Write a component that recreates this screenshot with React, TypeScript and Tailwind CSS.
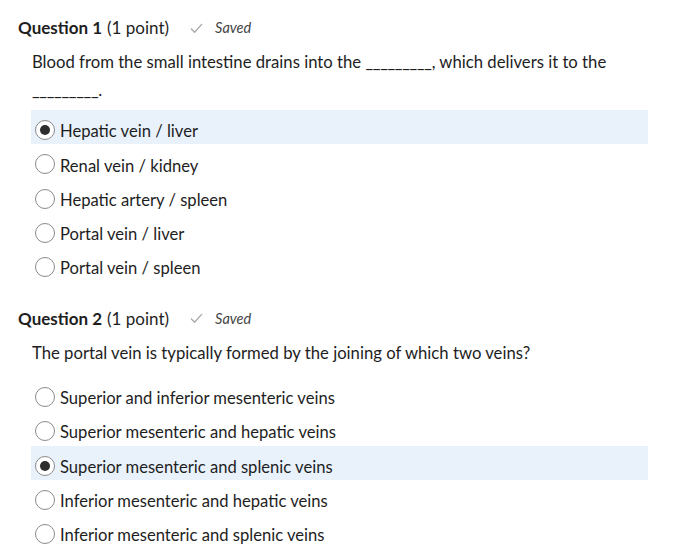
const questions = [
  {
    n: 1,
    text: (
      <>
        Blood from the small intestine drains into the <span className="tracking-[-0.3px]">_________</span>, which delivers it to the
        <br />
        <span className="tracking-[-0.3px]">_________</span>.
      </>
    ),
    options: ["Hepatic vein / liver", "Renal vein / kidney", "Hepatic artery / spleen", "Portal vein / liver", "Portal vein / spleen"],
    selected: 0,
  },
  {
    n: 2,
    text: <>The portal vein is typically formed by the joining of which two veins?</>,
    options: [
      "Superior and inferior mesenteric veins",
      "Superior mesenteric and hepatic veins",
      "Superior mesenteric and splenic veins",
      "Inferior mesenteric and hepatic veins",
      "Inferior mesenteric and splenic veins",
    ],
    selected: 2,
  },
];

function Radio({ checked }: { checked: boolean }) {
  return (
    <span className="flex h-[20px] w-[20px] shrink-0 items-center justify-center rounded-full border border-[#8a8a8a] bg-white">
      {checked && <span className="h-[10px] w-[10px] rounded-full bg-[#2d2d2d]" />}
    </span>
  );
}

function Heading({ n }: { n: number }) {
  return (
    <div className="flex h-[24px] items-center text-[17px] text-[#1e1e1e]">
      <span className="font-bold">Question {n}</span>
      <span className="ml-[5px]">(1 point)</span>
      <svg className="ml-[21px] h-[13px] w-[13px]" viewBox="0 0 14 14" fill="none">
        <path d="M1.5 7.5 L5 11 L12.5 2.5" stroke="#a8a8a8" strokeWidth="1.4" strokeLinecap="round" strokeLinejoin="round" />
      </svg>
      <span className="ml-[12px] text-[14.5px] italic text-[#444]">Saved</span>
    </div>
  );
}

export default function App() {
  return (
    <div className="h-[560px] w-[700px] overflow-hidden bg-white pl-[18px] pt-[16px] font-['Lato',sans-serif] text-[#1e1e1e]">
      {questions.map((q, qi) => (
        <div key={q.n} className={qi === 0 ? "" : "mt-[25.5px]"}>
          <Heading n={q.n} />
          <p className="ml-[14px] mt-[8px] text-[16.7px] leading-[28px]">{q.text}</p>
          <div className={q.n === 1 ? "mt-[6px] mr-[52px] ml-[13px]" : "mt-[10px] mr-[52px] ml-[13px]"}>
            {q.options.map((o, i) => (
              <div
                key={o}
                className={`flex h-[34.3px] items-center gap-[5px] pl-[4px] pt-[6px] text-[16.6px] ${i === q.selected ? "bg-[#e9f2fb]" : ""}`}
              >
                <Radio checked={i === q.selected} />
                <span className="pt-[3px]">{o}</span>
              </div>
            ))}
          </div>
        </div>
      ))}
    </div>
  );
}
